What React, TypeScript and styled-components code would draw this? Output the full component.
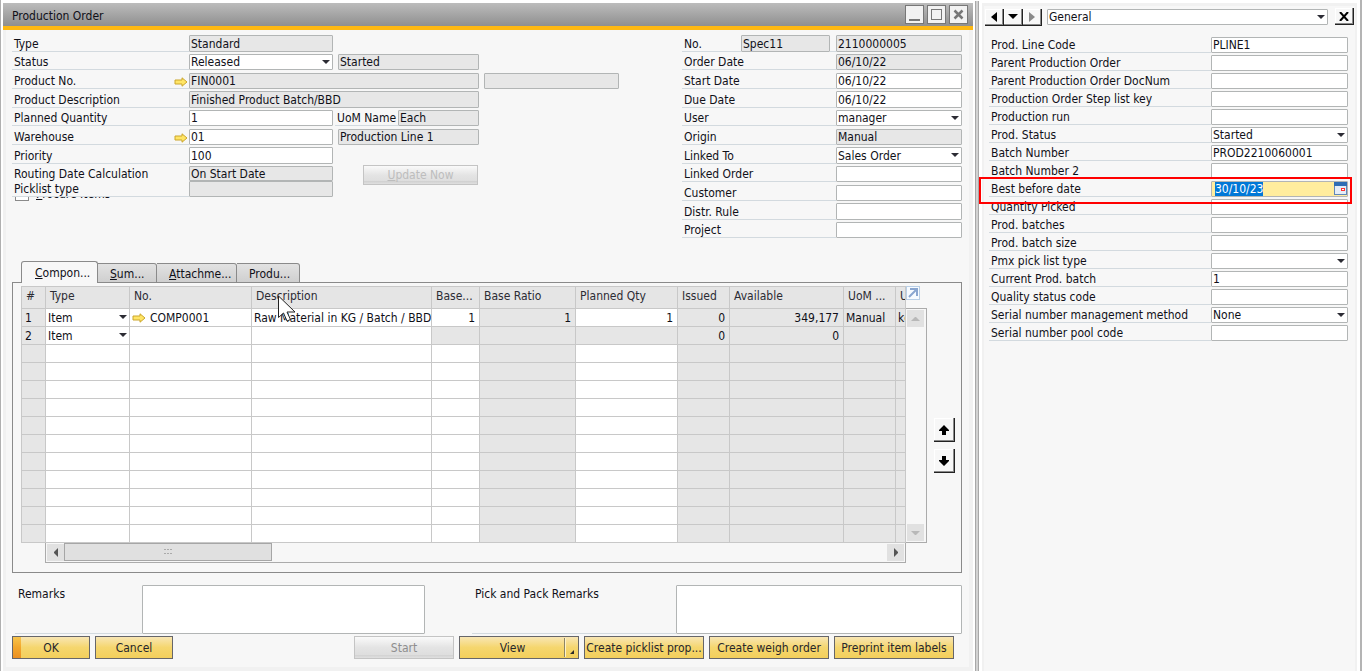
import React, { useEffect, useRef } from 'react';
import styled, { createGlobalStyle, css } from 'styled-components';

const GlobalStyle = createGlobalStyle`
  *, *::before, *::after { box-sizing: border-box; }
  body { margin: 0; background: #fff; }
  body, input, select, textarea, button, table {
    font: 12px/14px "DejaVu Sans Condensed", "DejaVu Sans", sans-serif;
    color: #101018;
  }
`;

/* ---------- frame ---------- */

const Desk = styled.div`
  display: flex;
  min-height: 100vh;
  padding: 3px 3px 0 2px;
  border-left: 1px solid #b0b0b0;
  border-right: 2px solid #b4b4b4;
  background: #fff;
`;

const Window = styled.main`
  flex: 1;
  min-width: 0;
  display: flex;
  flex-direction: column;
`;

const TitleBar = styled.header`
  display: flex;
  align-items: center;
  justify-content: space-between;
  height: 27px;
  padding: 0 5px 0 9px;
  border-bottom: 4px solid #fdb813;
  background: linear-gradient(#bcbcbc, #8f8f8f);
`;

const Title = styled.h1`
  margin: 0;
  padding-top: 2px;
  font: inherit;
  line-height: 16px;
`;

const WindowButtons = styled.div`
  display: flex;
  gap: 3px;
`;

const WindowButton = styled.button`
  display: flex;
  width: 19px;
  height: 19px;
  padding: 0;
  border: 1px solid #777;
  background: #f2f2f2;
`;

const Content = styled.div`
  flex: 1;
  padding: 5px 7px 7px 6px;
  border: solid #f1f1f1;
  border-width: 0 4px 4px 3px;
  background: #f7f7f7;
`;

const Splitter = styled.div`
  width: 4px;
  margin: -2px 3px 0 2px;
  border: 1px solid #a8a8a8;
  border-width: 0 1px;
  background: #d2d2d2;
`;

const SidePane = styled.aside`
  width: 375px;
  padding: 1px 1px 0;
  border: solid #f1f1f1;
  border-width: 3px 2px 0;
  background: #f7f7f7;
`;

/* ---------- fields ---------- */

const FormArea = styled.div`
  display: flex;
  justify-content: space-between;
  gap: 20px;
`;

const FormColumn = styled.div<{ $width: number }>`
  width: ${p => p.$width}px;
`;

const Row = styled.div<{ $pitch?: number }>`
  display: flex;
  height: ${p => p.$pitch ?? 19}px;
  padding-bottom: 2px;
  ${p => !p.$pitch && css`
    &:nth-child(3n + 2) { padding-bottom: 3px; }
    &:nth-child(3n) { height: 18px; }
  `}
`;

const Label = styled.label<{ $width?: number }>`
  ${p => (p.$width ? `width: ${p.$width}px;` : 'flex: 1;')}
  display: flex;
  align-items: center;
  justify-content: space-between;
  padding: 2px 1px 0 2px;
  border-bottom: 1px solid #d3dadf;
  line-height: 15px;
  white-space: nowrap;
`;

const Gap = styled.span<{ $width?: number; $lined?: boolean }>`
  width: ${p => p.$width ?? 5}px;
  border-bottom: 1px solid ${p => (p.$lined ? '#d3dadf' : 'transparent')};
`;

const fieldLook = css`
  border: 1px solid #b2b5b5;
  border-radius: 1px;
  background: #fff;
`;

const Field = styled.input<{ $width: number }>`
  width: ${p => p.$width}px;
  min-width: 0;
  padding: 0 1px;
  ${fieldLook}
  outline: none;
  &:read-only { background: #e7e7e7; }
`;

const SelectBox = styled.span<{ $width?: number }>`
  position: relative;
  display: flex;
  ${p => (p.$width ? `width: ${p.$width}px;` : 'flex: 1;')}
  &::after {
    content: '';
    position: absolute;
    right: 3px;
    top: 6px;
    border: 4px solid transparent;
    border-top-color: #2c2c34;
    border-bottom: 0;
    pointer-events: none;
  }
`;

const SelectInput = styled.select`
  flex: 1;
  min-width: 0;
  padding: 0 12px 0 1px;
  appearance: none;
  ${fieldLook}
  outline: none;
`;

const Select = ({ id, value, width, label }: { id?: string; value: string; width?: number; label?: string }) => (
  <SelectBox $width={width}>
    <SelectInput id={id} aria-label={label} defaultValue={value}>
      <option>{value}</option>
    </SelectInput>
  </SelectBox>
);

const LinkArrow = () => (
  <svg width="14" height="10" viewBox="0 0 14 10" aria-hidden="true">
    <path d="M1 3h7V.8L13 5l-5 4.200V7H1z" fill="#ffe566" stroke="#cba62c" />
  </svg>
);

const RoutingBlock = styled.div`
  display: flex;
  gap: 30px;
  ${Row} { padding-bottom: 0; }
  ${Row}:first-child ${Label} { border-bottom: 0; }
`;

const ClippedRow = styled.label`
  display: flex;
  align-items: flex-end;
  gap: 7px;
  height: 4px;
  padding-left: 3px;
  overflow: hidden;
  line-height: 15px;
  span { margin-bottom: -1px; }
`;

const SquareCheck = styled.input`
  flex: none;
  width: 14px;
  height: 14px;
  margin: 0;
  appearance: none;
  border: 1px solid #8a8a8a;
  background: #fff;
`;

/* ---------- buttons ---------- */

const Button = styled.button<{ $width: number }>`
  position: relative;
  width: ${p => p.$width}px;
  height: 23px;
  padding: 0 1px;
  border: 1px solid #66666a;
  background: linear-gradient(#f8e6b4, #f5d66e 50%, #f3cf5c);
  color: #26262c;
  white-space: nowrap;
  overflow: hidden;
  text-overflow: ellipsis;
  &:disabled {
    border-color: #c4c4c4;
    background: linear-gradient(#fafafa, #e4e4e4 50%, #dedede 85%, #d2d2d2 86%, #e0e0e0);
    color: #8e8e8e;
  }
`;

const PaleButton = styled(Button)`
  height: 20px;
  margin-top: -1px;
  &:disabled { color: #bdbdbd; }
`;

const DefaultButton = styled(Button)`
  background: linear-gradient(#f7c44c, #f2a62c 50%, #ec9022) 0 0 / 8px 100% no-repeat,
    linear-gradient(#f8e6b4, #f5d66e 50%, #f3cf5c);
`;

const MenuButton = styled(Button)`
  padding-right: 14px;
  &::before {
    content: '';
    position: absolute;
    right: 12px;
    top: 1px;
    bottom: 1px;
    width: 2px;
    border-left: 1px solid #8c8466;
    background: #fff3c8;
  }
  &::after {
    content: '';
    position: absolute;
    right: 4px;
    bottom: 4px;
    border-left: 4px solid transparent;
    border-bottom: 4px solid #2a2a2a;
  }
`;

const RaisedButton = styled.button<{ $w: number; $h: number }>`
  display: flex;
  align-items: center;
  justify-content: center;
  width: ${p => p.$w}px;
  height: ${p => p.$h}px;
  padding: 0;
  border: solid #222;
  border-width: 0 1px 1px 0;
  background: #f7f7f7;
  box-shadow: inset -1px -1px #8a8a8a, inset 1px 1px #fff;
`;

/* ---------- tabs and grid ---------- */

const Tabs = styled.div`
  display: flex;
  align-items: flex-end;
  height: 22px;
  margin: 20px 0 0 9px;
`;

const Tab = styled.button<{ $width: number; $active?: boolean }>`
  width: ${p => p.$width}px;
  height: 20px;
  padding: 2px 4px 0 12px;
  border: 1px solid #8a8a8a;
  border-left: 0;
  border-radius: 0 3px 0 0;
  background: linear-gradient(#e2e2e2, #cfcfcf);
  text-align: left;
  white-space: nowrap;
  ${p => p.$active && css`
    position: relative;
    height: 22px;
    padding: 1px 4px 0 13px;
    border-left: 1px solid #8a8a8a;
    border-bottom: 0;
    border-radius: 3px 3px 0 0;
    background: #f7f7f7;
  `}
`;

const TabPanel = styled.section`
  display: flex;
  gap: 7px;
  height: 291px;
  margin-top: -1px;
  padding: 3px 6px 0 8px;
  border: 1px solid #8a8a8a;
`;

const GridArea = styled.div`
  position: relative;
  flex: 1;
  min-width: 0;
`;

const GridTop = styled.div`
  display: flex;
`;

const TableClip = styled.div`
  flex: 1;
  min-width: 0;
  overflow: hidden;
  border: solid #c8c8c8;
  border-width: 1px 1px 0 1px;
`;

const Table = styled.table`
  table-layout: fixed;
  width: 922px;
  min-width: 100%;
  border-spacing: 0;
`;

const Th = styled.th`
  height: 22px;
  padding: 0 0 3px 4px;
  border: solid #c8c8c8;
  border-width: 0 1px 1px 0;
  background: #e5e5e5;
  color: #2c2c34;
  font-weight: 400;
  text-align: left;
  white-space: nowrap;
  overflow: hidden;
`;

const Td = styled.td<{ $gray?: boolean; $right?: boolean }>`
  height: 18px;
  padding: ${p => (p.$right ? '0 4px 0 0' : '0 0 0 2px')};
  border: solid #c8c8c8;
  border-width: 0 1px 1px 0;
  background: ${p => (p.$gray ? '#e6e6e6' : '#fff')};
  text-align: ${p => (p.$right ? 'right' : 'left')};
  white-space: nowrap;
  overflow: hidden;
  &:first-child { padding-left: 3px; }
`;

const LinkedCell = styled.span`
  display: flex;
  align-items: center;
  gap: 4px;
`;

const CellSelect = styled(SelectBox)`
  select { border: 0; height: 17px; padding-left: 0; }
  &::after { right: 2px; }
`;

const SideScroll = styled.div`
  width: 21px;
  display: flex;
  flex-direction: column;
`;

const ExpandButton = styled.button`
  display: flex;
  width: 14px;
  height: 14px;
  margin-bottom: 8px;
  padding: 0;
  border: 1px solid #b9cfe6;
  background: #f7fbff;
`;

const VTrack = styled.div`
  flex: 1;
  display: flex;
  flex-direction: column;
  justify-content: space-between;
  padding: 1px;
  border: solid #ababab;
  border-width: 1px 1px 1px 0;
`;

const HTrack = styled.div`
  display: flex;
  align-items: center;
  height: 20px;
  margin: 0 21px 0 24px;
  padding: 0 1px 1px;
  border: solid #ababab;
  border-width: 0 1px 1px;
`;

const ScrollButton = styled.button<{ $end?: boolean }>`
  display: flex;
  align-items: center;
  justify-content: center;
  width: 17px;
  height: 17px;
  padding: 0;
  border: 0;
  background: #e1e1e1;
  ${p => p.$end && 'margin-left: auto;'}
`;

const Thumb = styled.div`
  display: flex;
  align-items: center;
  justify-content: center;
  width: 208px;
  height: 18px;
  border: 1px solid #a6a6a6;
  background: #e0e0e0;
`;

const MoveButtons = styled.div`
  display: flex;
  flex-direction: column;
  gap: 7px;
  padding-top: 132px;
`;

const Pointer = styled.svg`
  position: absolute;
  left: 257px;
  top: 9px;
`;

/* ---------- footer ---------- */

const RemarksRow = styled.div`
  display: flex;
  justify-content: space-between;
  margin: 12px 0 2px 3px;
`;

const RemarksField = styled.div`
  display: flex;
  height: 49px;
`;

const RemarksLabel = styled.label<{ $width: number }>`
  width: ${p => p.$width}px;
  padding: 2px 3px 0;
  border-bottom: 1px solid #d3dadf;
`;

const Remarks = styled.textarea<{ $width: number }>`
  width: ${p => p.$width}px;
  ${fieldLook}
  resize: none;
`;

const ButtonBar = styled.div`
  display: flex;
  justify-content: space-between;
  padding-right: 8px;
`;

const ButtonGroup = styled.div`
  display: flex;
  gap: 5px;
`;

/* ---------- side pane ---------- */

const PaneBar = styled.div`
  display: flex;
  align-items: center;
  height: 19px;
  margin-bottom: 11px;
`;

const PaneNav = styled.div`
  display: flex;
  padding-top: 1px;
  margin-right: 5px;
`;

const PaneSelect = styled.div`
  flex: 1;
  display: flex;
  height: 16px;
  margin-right: 7px;
`;

const PaneRows = styled.div`
  padding: 0 6px 0 4px;
`;

const HighlightRow = styled(Row)`
  position: relative;
  &::after {
    content: '';
    position: absolute;
    inset: -4px -4px -5px -10px;
    border: 2px solid #f00;
    pointer-events: none;
  }
`;

const DateBox = styled.span`
  position: relative;
  display: flex;
  svg { position: absolute; right: 1px; top: 1px; }
`;

const DateField = styled(Field)`
  padding-left: 3px;
  background: #ffed9e;
  &::selection { background: #0078d7; color: #fff; }
`;

/* ---------- data ---------- */

type Control = { kind?: 'select' | 'readonly' | 'date'; label: string; value: string };

const orderFields: Control[] = [
  { kind: 'readonly', label: 'Order Date', value: '06/10/22' },
  { label: 'Start Date', value: '06/10/22' },
  { label: 'Due Date', value: '06/10/22' },
  { kind: 'select', label: 'User', value: 'manager' },
  { kind: 'readonly', label: 'Origin', value: 'Manual' },
  { kind: 'select', label: 'Linked To', value: 'Sales Order' },
  { label: 'Linked Order', value: '' },
  { label: 'Customer', value: '' },
  { label: 'Distr. Rule', value: '' },
  { label: 'Project', value: '' },
];

const paneFields: Control[] = [
  { label: 'Prod. Line Code', value: 'PLINE1' },
  { label: 'Parent Production Order', value: '' },
  { label: 'Parent Production Order DocNum', value: '' },
  { label: 'Production Order Step list key', value: '' },
  { label: 'Production run', value: '' },
  { kind: 'select', label: 'Prod. Status', value: 'Started' },
  { label: 'Batch Number', value: 'PROD2210060001' },
  { label: 'Batch Number 2', value: '' },
  { kind: 'date', label: 'Best before date', value: '30/10/23' },
  { label: 'Quantity Picked', value: '' },
  { label: 'Prod. batches', value: '' },
  { label: 'Prod. batch size', value: '' },
  { kind: 'select', label: 'Pmx pick list type', value: '' },
  { label: 'Current Prod. batch', value: '1' },
  { label: 'Quality status code', value: '' },
  { kind: 'select', label: 'Serial number management method', value: 'None' },
  { label: 'Serial number pool code', value: '' },
];

const columns: [string, number][] = [
  ['#', 24], ['Type', 84], ['No.', 122], ['Description', 180], ['Base...', 48], ['Base Ratio', 96],
  ['Planned Qty', 102], ['Issued', 52], ['Available', 114], ['UoM ...', 52], ['UoM Name', 48],
];

const gridRows: string[][] = [
  ['1', 'Item', 'COMP0001', 'Raw Material in KG / Batch / BBD', '1', '1', '1', '0', '349,177', 'Manual', 'kg'],
  ['2', 'Item', '', '', '', '', '', '0', '0', '', ''],
  ...Array.from({ length: 11 }, () => Array(11).fill('')),
];

const isGray = (row: number, col: number) =>
  col === 0 || col === 5 || col > 6 || (row === 1 && (col === 4 || col === 6));

/* ---------- views ---------- */

const Triangle = ({ points, w, h, color = '#000' }: { points: string; w: number; h: number; color?: string }) => (
  <svg width={w} height={h} aria-hidden="true">
    <polygon points={points} fill={color} />
  </svg>
);

const CalendarIcon = () => (
  <svg width="13" height="13" aria-hidden="true">
    <rect x=".5" y=".5" width="12" height="12" fill="#e4edf7" stroke="#5f87b8" />
    <rect width="13" height="4" fill="#2e6db4" />
    <rect x="7" y="6" width="4" height="3" fill="#f33" />
    <rect x="8" y="7" width="2" height="1" fill="#fff" />
  </svg>
);

const DateInput = ({ id, value }: { id: string; value: string }) => {
  const ref = useRef<HTMLInputElement>(null);
  useEffect(() => {
    ref.current?.focus();
    ref.current?.select();
  }, []);
  return (
    <DateBox>
      <DateField id={id} ref={ref} $width={137} defaultValue={value} />
      <CalendarIcon />
    </DateBox>
  );
};

const FieldRow = ({ control, width, pitch }: { control: Control; width: number; pitch?: number }) => {
  const id = control.label.toLowerCase().replace(/\W+/g, '-');
  const Shell = control.kind === 'date' ? HighlightRow : Row;
  return (
    <Shell $pitch={pitch}>
      <Label htmlFor={id}>{control.label}</Label>
      {control.kind === 'select' && <Select id={id} value={control.value} width={width} />}
      {control.kind === 'date' && <DateInput id={id} value={control.value} />}
      {(!control.kind || control.kind === 'readonly') && (
        <Field id={id} $width={width} defaultValue={control.value} readOnly={control.kind === 'readonly'} />
      )}
    </Shell>
  );
};

const ProductForm = () => (
  <FormColumn $width={607}>
    <Row>
      <Label $width={177} htmlFor="type">Type</Label>
      <Field id="type" $width={144} readOnly value="Standard" />
    </Row>
    <Row>
      <Label $width={177} htmlFor="status">Status</Label>
      <Select id="status" value="Released" width={144} />
      <Gap />
      <Field aria-label="Status detail" $width={141} readOnly value="Started" />
    </Row>
    <Row>
      <Label $width={177} htmlFor="product">Product No.<LinkArrow /></Label>
      <Field id="product" $width={290} readOnly value="FIN0001" />
      <Gap />
      <Field aria-label="Product variant" $width={135} readOnly value="" />
    </Row>
    <Row>
      <Label $width={177} htmlFor="description">Product Description</Label>
      <Field id="description" $width={290} readOnly value="Finished Product Batch/BBD" />
    </Row>
    <Row>
      <Label $width={177} htmlFor="planned">Planned Quantity</Label>
      <Field id="planned" $width={144} defaultValue="1" />
      <Gap $width={2} />
      <Label $width={63} htmlFor="uom">UoM Name</Label>
      <Field id="uom" $width={81} readOnly value="Each" />
    </Row>
    <Row>
      <Label $width={177} htmlFor="warehouse">Warehouse<LinkArrow /></Label>
      <Field id="warehouse" $width={144} defaultValue="01" />
      <Gap />
      <Field aria-label="Warehouse name" $width={141} readOnly value="Production Line 1" />
    </Row>
    <Row>
      <Label $width={177} htmlFor="priority">Priority</Label>
      <Field id="priority" $width={144} defaultValue="100" />
    </Row>
    <RoutingBlock>
      <div>
        <Row $pitch={15}>
          <Label $width={177} htmlFor="routing">Routing Date Calculation</Label>
          <Field id="routing" $width={144} readOnly value="On Start Date" />
        </Row>
        <Row $pitch={16}>
          <Label $width={177} htmlFor="picklist">Picklist type</Label>
          <Field id="picklist" $width={144} readOnly value="" />
        </Row>
        <ClippedRow>
          <SquareCheck type="checkbox" />
          <span><u>P</u>rocure Items</span>
        </ClippedRow>
      </div>
      <PaleButton $width={115} disabled><u>U</u>pdate Now</PaleButton>
    </RoutingBlock>
  </FormColumn>
);

const OrderForm = () => (
  <FormColumn $width={280}>
    <Row>
      <Label $width={59} htmlFor="series">No.</Label>
      <Field id="series" $width={89} readOnly value="Spec11" />
      <Gap $lined $width={6} />
      <Field aria-label="Document number" $width={126} readOnly value="2110000005" />
    </Row>
    {orderFields.map(f => <FieldRow key={f.label} control={f} width={126} />)}
  </FormColumn>
);

const renderCell = (text: string, col: number) => {
  if (!text) return null;
  if (col === 1) {
    return (
      <CellSelect>
        <SelectInput aria-label="Type" defaultValue={text}><option>{text}</option></SelectInput>
      </CellSelect>
    );
  }
  if (col === 2) return <LinkedCell><LinkArrow />{text}</LinkedCell>;
  return text;
};

const ComponentsGrid = () => (
  <GridArea>
    <GridTop>
      <TableClip>
        <Table>
          <colgroup>{columns.map(([name, w]) => <col key={name} width={w} />)}</colgroup>
          <thead>
            <tr>{columns.map(([name]) => <Th key={name}>{name}</Th>)}</tr>
          </thead>
          <tbody>
            {gridRows.map((row, r) => (
              <tr key={r}>
                {row.map((text, c) => (
                  <Td key={c} $gray={isGray(r, c)} $right={c > 3 && c < 9}>{renderCell(text, c)}</Td>
                ))}
              </tr>
            ))}
          </tbody>
        </Table>
      </TableClip>
      <SideScroll>
        <ExpandButton aria-label="Expand grid">
          <svg width="12" height="12" aria-hidden="true">
            <path d="M2 10L9 3M3 2h7v7" fill="none" stroke="#8aa6d0" strokeWidth="2" />
          </svg>
        </ExpandButton>
        <VTrack>
          <ScrollButton aria-label="Scroll up"><Triangle points="4,0 5,0 9,4 0,4" w={9} h={4} color="#b8b8b8" /></ScrollButton>
          <ScrollButton aria-label="Scroll down"><Triangle points="0,0 9,0 5,4 4,4" w={9} h={4} color="#b8b8b8" /></ScrollButton>
        </VTrack>
      </SideScroll>
    </GridTop>
    <HTrack>
      <ScrollButton aria-label="Scroll left"><Triangle points="0,4 4,0 4,9 0,5" w={4} h={9} color="#555" /></ScrollButton>
      <Thumb>
        <svg width="8" height="6" aria-hidden="true">
          {[0, 3, 6].map(x => (
            <g key={x} fill="#aaa"><rect x={x} width="2" height="1" /><rect x={x} y="4" width="2" height="1" /></g>
          ))}
        </svg>
      </Thumb>
      <ScrollButton $end aria-label="Scroll right"><Triangle points="0,0 4,4 4,5 0,9" w={4} h={9} color="#555" /></ScrollButton>
    </HTrack>
    <Pointer width="20" height="28" viewBox="0 0 20 28" aria-hidden="true">
      <path d="M.5 1v21.500l5-4.500 3.500 8 3.500-1.500-3.500-7.500h8z" fill="#fff" stroke="#222" />
    </Pointer>
  </GridArea>
);

const App = () => (
  <>
    <GlobalStyle />
    <Desk>
      <Window>
        <TitleBar>
          <Title>Production Order</Title>
          <WindowButtons>
            <WindowButton aria-label="Minimize">
              <svg width="17" height="17"><rect x="3" y="13" width="11" height="2" fill="#777" /></svg>
            </WindowButton>
            <WindowButton aria-label="Maximize">
              <svg width="17" height="17"><rect x="3.500" y="3.500" width="10" height="10" fill="none" stroke="#777" /></svg>
            </WindowButton>
            <WindowButton aria-label="Close">
              <svg width="17" height="17"><path d="M4.500 4.500l8 8M12.500 4.500l-8 8" stroke="#777" strokeWidth="2.500" /></svg>
            </WindowButton>
          </WindowButtons>
        </TitleBar>
        <Content>
          <FormArea>
            <ProductForm />
            <OrderForm />
          </FormArea>
          <Tabs role="tablist">
            <Tab role="tab" $active $width={77}><u>C</u>ompon...</Tab>
            <Tab role="tab" $width={59}><u>S</u>um...</Tab>
            <Tab role="tab" $width={80}><u>A</u>ttachme...</Tab>
            <Tab role="tab" $width={63}>Produ...</Tab>
          </Tabs>
          <TabPanel>
            <ComponentsGrid />
            <MoveButtons>
              <RaisedButton $w={21} $h={24} aria-label="Move up">
                <Triangle points="0,5 5,0 10,5 10,6 7,6 7,10 3,10 3,6 0,6" w={10} h={10} />
              </RaisedButton>
              <RaisedButton $w={21} $h={24} aria-label="Move down">
                <Triangle points="3,0 7,0 7,4 10,4 10,5 5,10 0,5 0,4 3,4" w={10} h={10} />
              </RaisedButton>
            </MoveButtons>
          </TabPanel>
          <RemarksRow>
            <RemarksField>
              <RemarksLabel $width={127} htmlFor="remarks">Remarks</RemarksLabel>
              <Remarks $width={283} id="remarks" />
            </RemarksField>
            <RemarksField>
              <RemarksLabel $width={204} htmlFor="pick-remarks">Pick and Pack Remarks</RemarksLabel>
              <Remarks $width={286} id="pick-remarks" />
            </RemarksField>
          </RemarksRow>
          <ButtonBar>
            <ButtonGroup>
              <DefaultButton $width={78}>OK</DefaultButton>
              <Button $width={78}>Cancel</Button>
            </ButtonGroup>
            <ButtonGroup>
              <Button $width={100} disabled>Start</Button>
              <MenuButton $width={120}>View</MenuButton>
              <Button $width={120}>Create picklist prop...</Button>
              <Button $width={120}>Create weigh order</Button>
              <Button $width={120}>Preprint item labels</Button>
            </ButtonGroup>
          </ButtonBar>
        </Content>
      </Window>
      <Splitter />
      <SidePane>
        <PaneBar>
          <PaneNav>
            <RaisedButton $w={19} $h={17} aria-label="Previous"><Triangle points="0,5 6,0 6,10" w={6} h={10} /></RaisedButton>
            <RaisedButton $w={19} $h={17} aria-label="List"><Triangle points="0,0 10,0 5,5" w={10} h={5} /></RaisedButton>
            <RaisedButton $w={19} $h={17} aria-label="Next"><Triangle points="0,0 6,5 0,10" w={6} h={10} color="#888" /></RaisedButton>
          </PaneNav>
          <PaneSelect><Select value="General" label="Category" /></PaneSelect>
          <RaisedButton $w={19} $h={17} aria-label="Close pane">
            <svg width="10" height="9"><path d="M1 0l8 9M9 0l-8 9" stroke="#000" strokeWidth="2" /></svg>
          </RaisedButton>
        </PaneBar>
        <PaneRows>
          {paneFields.map(f => <FieldRow key={f.label} control={f} width={137} pitch={18} />)}
        </PaneRows>
      </SidePane>
    </Desk>
  </>
);

export default App;
